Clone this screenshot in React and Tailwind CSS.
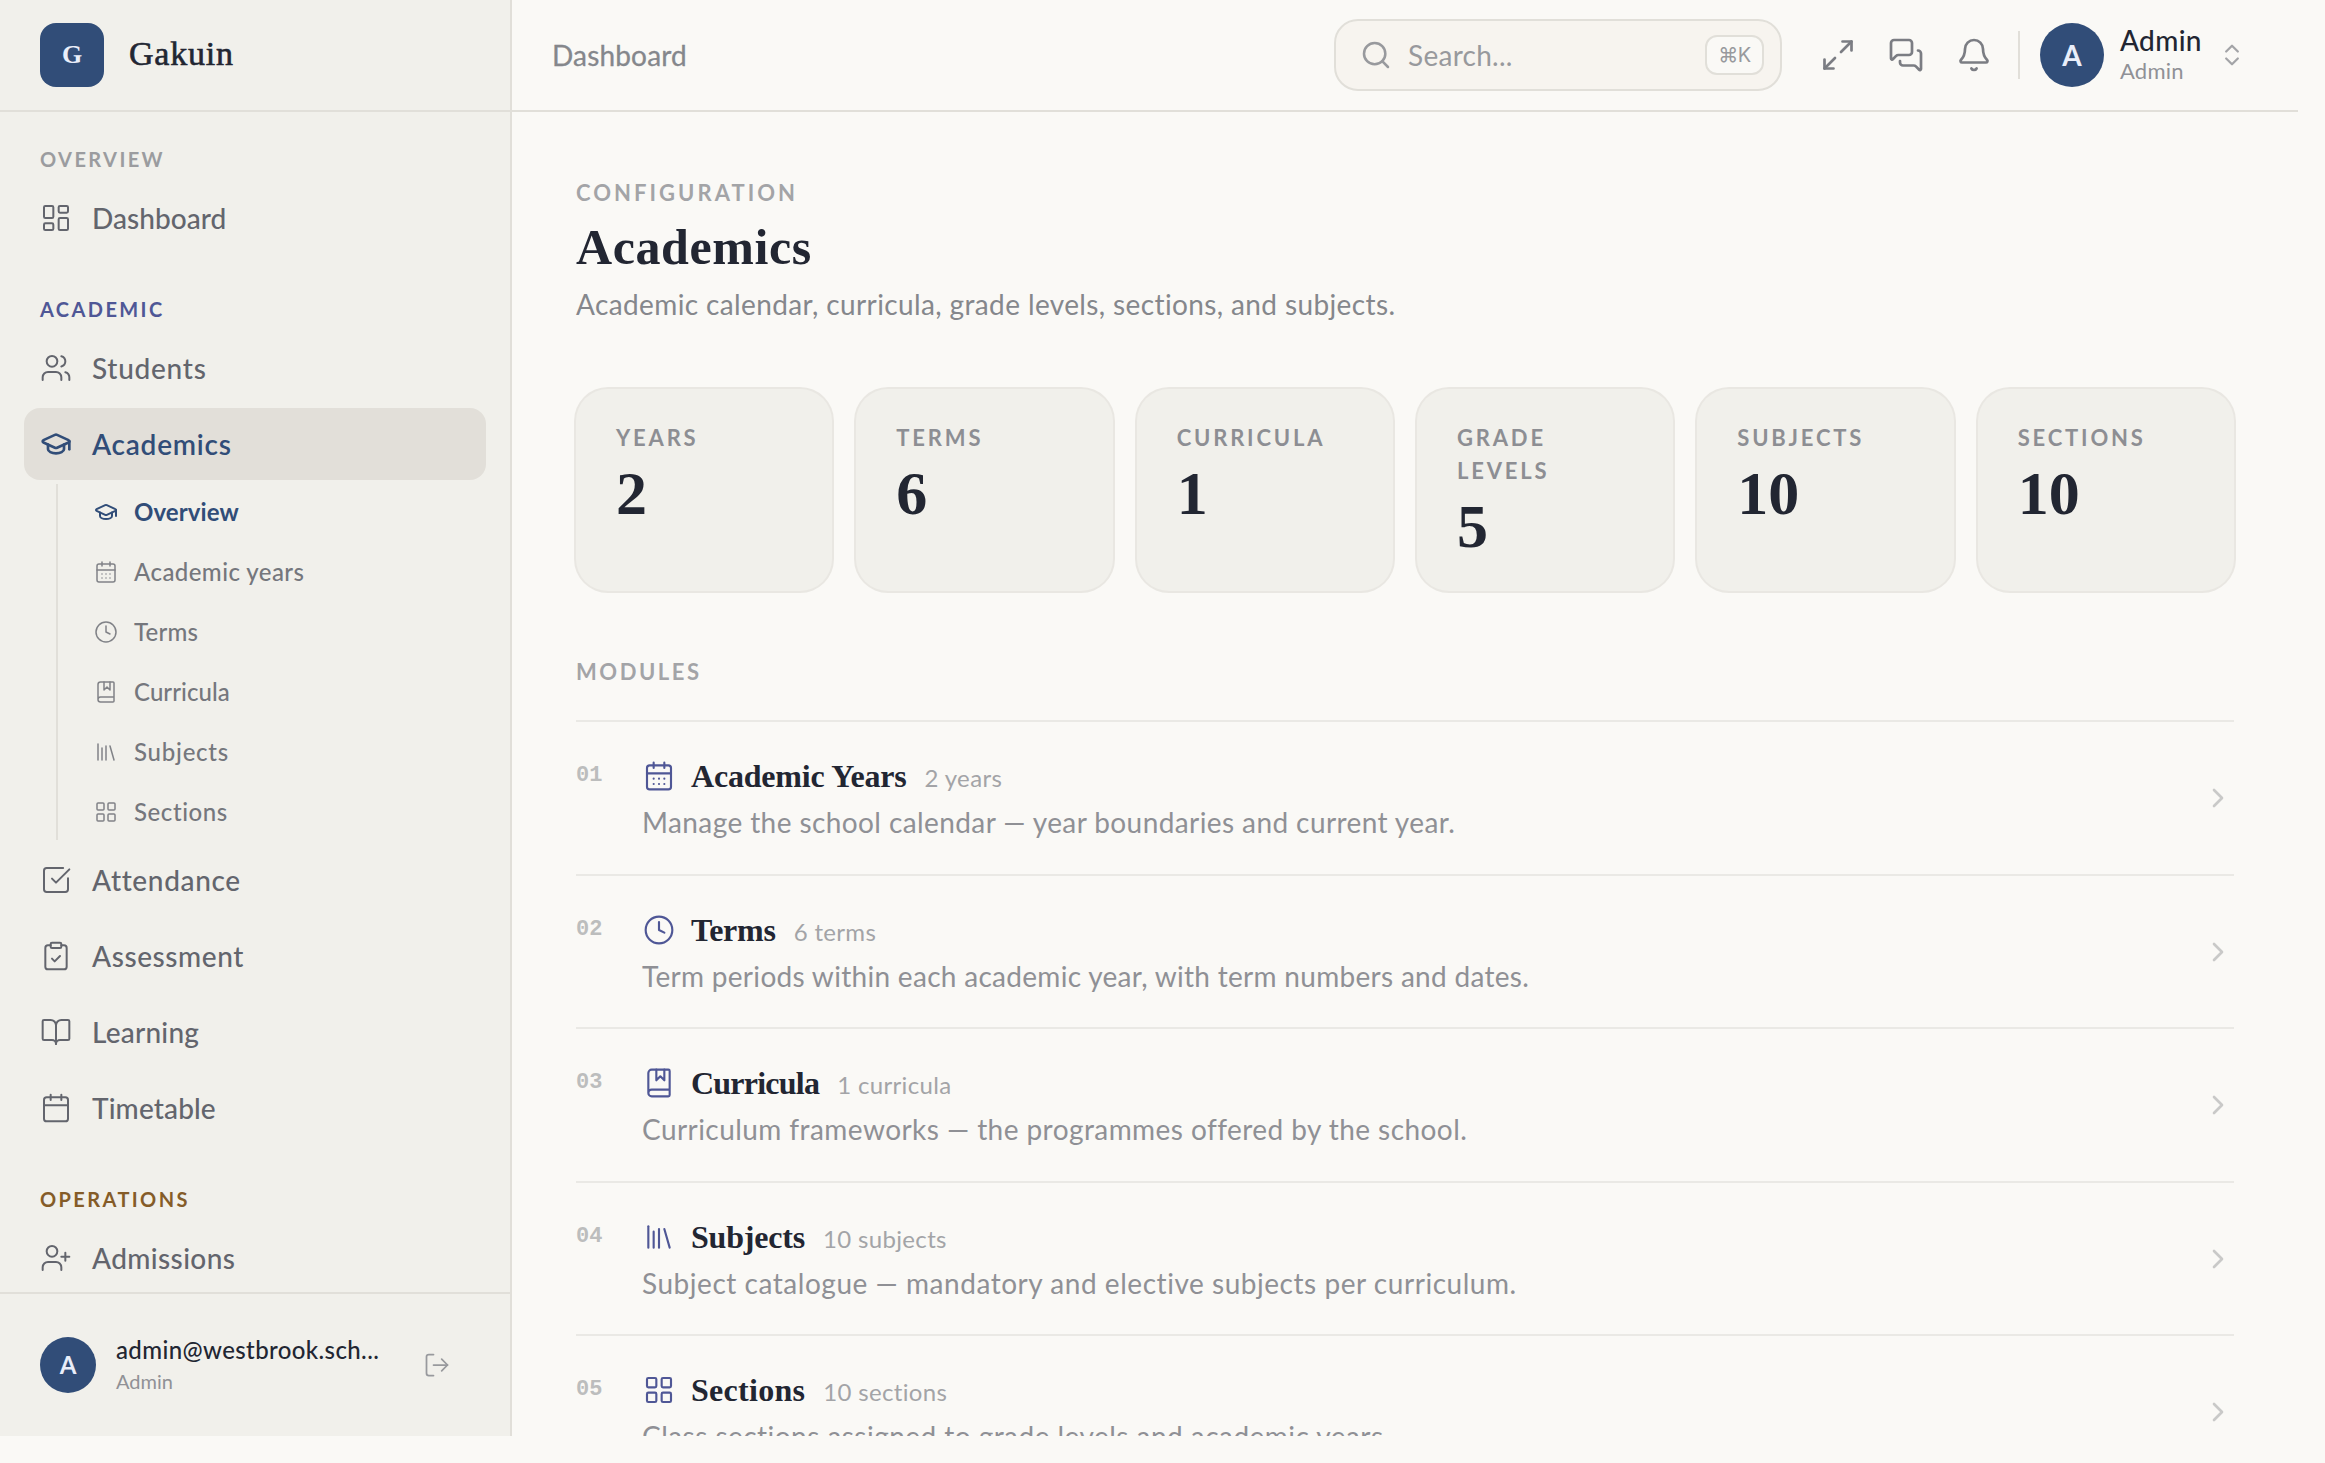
import {
  Bell, BookMarked, BookOpen, Calendar, CalendarDays, ChevronRight, ChevronsUpDown, ClipboardCheck,
  Clock, GraduationCap, LayoutDashboard, LayoutGrid, Library, LogOut, Maximize2, MessagesSquare,
  Search, SquareCheckBig, UserPlus, Users,
} from "lucide-react";

const academicsNav = [
  { label: "Overview", icon: GraduationCap, active: true },
  { label: "Academic years", icon: CalendarDays, spacing: "tracking-[0.018em]" },
  { label: "Terms", icon: Clock, spacing: "tracking-[0.01em]" },
  { label: "Curricula", icon: BookMarked, spacing: "tracking-[0.003em]" },
  { label: "Subjects", icon: Library, spacing: "tracking-[0.032em]" },
  { label: "Sections", icon: LayoutGrid, spacing: "tracking-[0.024em]" },
];

const sections = [
  {
    title: "Overview",
    color: "text-[#9b9c9f]",
    items: [{ label: "Dashboard", icon: LayoutDashboard, spacing: "tracking-[0.002em]" }],
  },
  {
    title: "Academic",
    color: "text-[#4f5796]",
    items: [
      { label: "Students", icon: Users, spacing: "tracking-[0.026em]" },
      { label: "Academics", icon: GraduationCap, active: true, children: academicsNav },
      { label: "Attendance", icon: SquareCheckBig, spacing: "tracking-[0.023em]" },
      { label: "Assessment", icon: ClipboardCheck, spacing: "tracking-[0.021em]" },
      { label: "Learning", icon: BookOpen, spacing: "tracking-[0.008em]" },
      { label: "Timetable", icon: Calendar, spacing: "tracking-[0.005em]" },
    ],
  },
  {
    title: "Operations",
    color: "text-[#855c28]",
    items: [{ label: "Admissions", icon: UserPlus, spacing: "tracking-[0.014em]" }],
  },
];

const stats = [
  { label: "Years", value: 2 },
  { label: "Terms", value: 6 },
  { label: "Curricula", value: 1 },
  { label: "Grade levels", value: 5 },
  { label: "Subjects", value: 10 },
  { label: "Sections", value: 10 },
];

const modules = [
  { title: "Academic Years", spacing: "tracking-[-0.006em]", count: "2 years", icon: CalendarDays, text: "Manage the school calendar — year boundaries and current year.", textSpacing: "tracking-[0.0145em]" },
  { title: "Terms", spacing: "tracking-[-0.008em]", count: "6 terms", icon: Clock, text: "Term periods within each academic year, with term numbers and dates.", textSpacing: "tracking-[0.0107em]" },
  { title: "Curricula", spacing: "tracking-[-0.024em]", count: "1 curricula", icon: BookMarked, text: "Curriculum frameworks — the programmes offered by the school.", textSpacing: "tracking-[0.0155em]" },
  { title: "Subjects", spacing: "tracking-[-0.006em]", count: "10 subjects", icon: Library, text: "Subject catalogue — mandatory and elective subjects per curriculum.", textSpacing: "tracking-[0.0192em]" },
  { title: "Sections", spacing: "tracking-[0.009em]", count: "10 sections", icon: LayoutGrid, text: "Class sections assigned to grade levels and academic years.", textSpacing: "tracking-[0.0165em]" },
];

function SubNav({ items }) {
  return (
    <ul className="mt-1 mb-1 ml-8 flex flex-col gap-1 border-l-2 border-[#e1dfd9]">
      {items.map(({ label, icon: Icon, active, spacing }) => (
        <li
          key={label}
          className={`flex h-14 items-center gap-4 pl-9 text-2xl ${active ? "font-bold tracking-[0.004em] text-[#314d78]" : `font-medium text-[#75777d] ${spacing}`}`}
        >
          <Icon size={24} strokeWidth={active ? 2 : 1.5} className={active ? "" : "opacity-90"} />
          <span>{label}</span>
        </li>
      ))}
    </ul>
  );
}

function NavItem({ item }) {
  const { label, icon: Icon, active, spacing, children } = item;
  return (
    <li>
      <div
        className={`flex h-[72px] items-center gap-5 rounded-[16px] px-4 text-[28px] ${active ? "bg-[#e2dfd9] font-semibold tracking-[0.027em] text-[#314d78]" : `font-medium text-[#63656d] ${spacing}`}`}
      >
        <Icon size={32} strokeWidth={active ? 2 : 1.5} />
        <span>{label}</span>
      </div>
      {children && <SubNav items={children} />}
    </li>
  );
}

function Sidebar() {
  return (
    <aside className="flex w-[512px] shrink-0 flex-col border-r-2 border-[#e1dfd9] bg-[#f1f0eb]">
      <div className="flex h-28 shrink-0 items-center border-b-2 border-[#e1dfd9] px-10">
        <div className="flex size-16 items-center justify-center rounded-[16px] bg-[#314d78] pb-0.5 font-['Liberation_Serif',serif] text-[26px] font-bold text-[#e9eefa]">
          G
        </div>
        <span className="ml-[25px] pb-1 font-['Liberation_Serif',serif] text-[34px] tracking-[0.023em] text-[#222632] [-webkit-text-stroke:0.6px_#222632]">
          Gakuin
        </span>
      </div>

      <nav className="flex min-h-0 flex-1 flex-col gap-10 overflow-hidden px-6 pt-8">
        {sections.map((section) => (
          <div key={section.title} className="shrink-0">
            <h2 className={`mb-2 px-4 text-xl leading-[30px] font-bold tracking-[0.12em] uppercase ${section.color}`}>
              {section.title}
            </h2>
            <ul className="flex flex-col gap-1 [&>li:has(ul)]:-mb-1">
              {section.items.map((item) => (
                <NavItem key={item.label} item={item} />
              ))}
            </ul>
          </div>
        ))}
      </nav>

      <div className="flex h-36 shrink-0 items-center border-t-2 border-[#e1dfd9] px-10">
        <div className="flex size-14 items-center justify-center rounded-full bg-[#314d78] text-2xl font-bold text-[#e9eefa]">A</div>
        <div className="ml-5 w-[265px]">
          <p className="truncate text-2xl leading-8 font-medium tracking-[0.016em] text-[#222632]">admin@westbrook.sch...</p>
          <p className="text-xl leading-[30px] text-[#909196]">Admin</p>
        </div>
        <LogOut size={28} strokeWidth={1.5} className="ml-[42px] text-[#98999d]" />
      </div>
    </aside>
  );
}

function Header() {
  return (
    <header className="flex h-28 shrink-0 items-center border-b-2 border-[#e1dfd9] pr-[52px] pl-10">
      <span className="text-[28px] tracking-[0.006em] text-[#85878c] [-webkit-text-stroke:0.3px_#85878c]">Dashboard</span>

      <div className="ml-auto flex h-[72px] w-[448px] items-center rounded-[24px] border-2 border-[#e1dfd9] bg-[#f7f4ef] pr-4 pl-6 text-[#98999d]">
        <Search size={32} strokeWidth={1.9} />
        <span className="ml-4 text-[28px] tracking-[0.01em]">Search...</span>
        <kbd className="ml-auto flex h-10 w-[59px] items-center justify-center rounded-[12px] border-2 border-[#e1dfd9] bg-[#faf9f6] font-['Inter','DejaVu_Sans',sans-serif] text-xl tracking-[-0.02em]">
          ⌘K
        </kbd>
      </div>

      <div className="ml-[38px] flex gap-8 text-[#7b7d83]">
        <Maximize2 size={36} strokeWidth={1.8} />
        <MessagesSquare size={36} strokeWidth={1.8} />
        <Bell size={36} strokeWidth={1.8} />
      </div>

      <div className="ml-[26px] h-12 w-0.5 bg-[#e1dfd9]" />

      <div className="ml-5 flex items-center">
        <div className="flex size-16 items-center justify-center rounded-full bg-[#314d78] text-[28px] font-bold text-[#e9eefa]">A</div>
        <div className="ml-4 w-[82px]">
          <p className="text-[28px] leading-8 font-medium tracking-[0.012em] text-[#222632]">Admin</p>
          <p className="text-[22px] leading-[30px] tracking-[0.01em] text-[#909196]">Admin</p>
        </div>
        <ChevronsUpDown size={28} strokeWidth={1.9} className="ml-4 text-[#a3a4a7]" />
      </div>
    </header>
  );
}

function StatCard({ label, value }) {
  return (
    <div className="h-[202px] rounded-[32px] bg-[#f1f0eb] px-10 py-8 ring-2 ring-[#e9e7e2]">
      <p className="text-[22px] leading-[33px] font-bold tracking-[0.128em] text-[#8d8e93] uppercase">{label}</p>
      <p className="mt-[9px] font-['Liberation_Serif',serif] text-[62px] leading-[60px] font-bold text-[#222632]">{value}</p>
    </div>
  );
}

function ModuleRow({ module, number }) {
  const { title, spacing, count, icon: Icon, text, textSpacing } = module;
  return (
    <li className="flex h-[153.5px] shrink-0 border-t-2 border-[#eae9e5] pt-8">
      <span className="w-[66px] pt-[7px] font-['Liberation_Mono',monospace] text-[22px] leading-[30px] font-bold text-[#bcbdbd]">
        {number}
      </span>
      <div className="min-w-0 flex-1">
        <div className="ml-px flex h-11 items-center">
          <Icon size={32} strokeWidth={1.6} className="text-[#4f5796]" />
          <div className="ml-4 flex items-baseline gap-[18px]">
            <h3 className={`font-['Liberation_Serif',serif] text-[32px] leading-10 font-bold text-[#222632] ${spacing}`}>{title}</h3>
            <span className="text-2xl tracking-[0.014em] text-[#a3a4a7]">{count}</span>
          </div>
        </div>
        <p className={`mt-1 text-[28px] leading-10 text-[#8f9095] ${textSpacing}`}>{text}</p>
      </div>
      <ChevronRight size={32} strokeWidth={2} className="mt-7 text-[#c9c9c8]" />
    </li>
  );
}

export default function App() {
  return (
    <div className="h-[1463px] w-[2325px] overflow-hidden bg-[#faf9f6] font-['Lato','Open_Sans',sans-serif]">
      <div className="flex h-[1436px] w-[2298px] overflow-hidden">
        <Sidebar />
        <div className="flex min-w-0 flex-1 flex-col">
          <Header />
          <main className="flex min-h-0 flex-1 flex-col overflow-hidden px-16 pt-16">
            <p className="text-[22px] leading-[33px] font-bold tracking-[0.138em] text-[#a3a4a7] uppercase">Configuration</p>
            <h1 className="mt-2 font-['Liberation_Serif',serif] text-[50px] leading-[60px] font-bold tracking-[0.012em] text-[#222632]">
              Academics
            </h1>
            <p className="mt-1.5 text-[28px] leading-[42px] tracking-[0.0135em] text-[#85878c]">
              Academic calendar, curricula, grade levels, sections, and subjects.
            </p>

            <div className="mt-16 grid shrink-0 grid-cols-6 gap-6">
              {stats.map((s) => (
                <StatCard key={s.label} {...s} />
              ))}
            </div>

            <h2 className="mt-16 mb-8 text-[22px] leading-[33px] font-bold tracking-[0.116em] text-[#a3a4a7] uppercase">Modules</h2>
            <ul>
              {modules.map((m, i) => (
                <ModuleRow key={m.title} module={m} number={`0${i + 1}`} />
              ))}
            </ul>
          </main>
        </div>
      </div>
    </div>
  );
}
